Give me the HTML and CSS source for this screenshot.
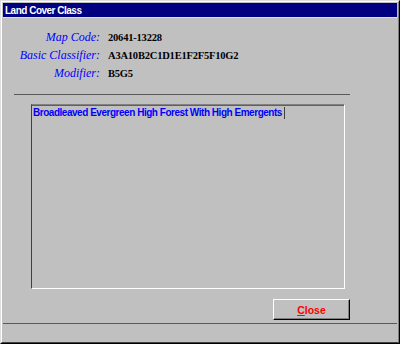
FILE: index.html
```html
<!DOCTYPE html>
<html>
<head>
<meta charset="utf-8">
<link rel="stylesheet" href="styles.css">
</head>
<body>
<div class="window">
  <div class="frame">
    <div class="titlebar"><span class="title">Land Cover Class</span></div>
    <div class="client">
      <div class="fields">
        <div class="label">Map Code:</div><div class="value">20641-13228</div>
        <div class="label">Basic Classifier:</div><div class="value">A3A10B2C1D1E1F2F5F10G2</div>
        <div class="label">Modifier:</div><div class="value">B5G5</div>
      </div>
      <div class="rule"></div>
      <div class="textbox"><span class="desc">Broadleaved Evergreen High Forest With High Emergents</span><span class="caret"></span></div>
      <div class="actions">
        <button class="btn"><span class="ul">C</span>lose</button>
      </div>
    </div>
    <div class="status"></div>
  </div>
</div>
</body>
</html>
```

FILE: styles.css
```css
html, body {
  margin: 0;
  padding: 0;
  background: #c0c0c0;
}
.window {
  width: 400px;
  height: 344px;
  box-sizing: border-box;
  background: #c0c0c0;
  border-top: 1px solid #dfdfdf;
  border-left: 1px solid #dfdfdf;
  border-right: 1px solid #000;
  border-bottom: 1px solid #000;
}
.frame {
  height: 100%;
  box-sizing: border-box;
  border-top: 1px solid #fff;
  border-left: 1px solid #fff;
  border-right: 1px solid #808080;
  border-bottom: 1px solid #404040;
  padding: 1px;
  display: flex;
  flex-direction: column;
}
.titlebar {
  height: 14px;
  background: #000080;
  display: flex;
  align-items: center;
  padding-left: 2px;
  border-bottom: 1px solid #dfdfdf;
}
.title {
  color: #fff;
  font-family: "Liberation Sans", Arial, sans-serif;
  font-weight: bold;
  font-size: 10px;
  letter-spacing: -0.5px;
}
.client {
  flex: 1;
  display: flex;
  flex-direction: column;
}
.fields {
  margin-top: 10px;
  display: grid;
  grid-template-columns: 97px auto;
  column-gap: 8px;
  grid-auto-rows: 18px;
  align-items: center;
}
.label {
  text-align: right;
  font-family: "Liberation Serif", "Times New Roman", serif;
  font-style: italic;
  font-size: 12px;
  color: #0000ff;
}
.value {
  font-family: "Liberation Serif", "Times New Roman", serif;
  font-weight: bold;
  font-size: 10.5px;
  letter-spacing: -0.2px;
  color: #000;
}
.rule {
  margin: 12px 0 0 11px;
  width: 336px;
  height: 1px;
  background: #5a5a5a;
}
.textbox {
  margin: 9px 0 0 28px;
  width: 314px;
  height: 185px;
  box-sizing: border-box;
  border-top: 1px solid #808080;
  border-left: 1px solid #404040;
  border-right: 1px solid #fff;
  border-bottom: 1px solid #fff;
  box-shadow: inset 0 1px 0 #606060;
  padding: 2px 0 0 1px;
  display: flex;
  align-items: flex-start;
}
.desc {
  font-family: "Liberation Sans", Arial, sans-serif;
  font-weight: bold;
  font-size: 10px;
  letter-spacing: -0.47px;
  color: #0000ff;
  line-height: 12px;
}
.caret {
  width: 1px;
  height: 12px;
  margin-left: 2px;
  background: #404040;
}
.actions {
  margin: 10px 0 0 270px;
}
.btn {
  width: 77px;
  height: 21px;
  box-sizing: border-box;
  background: #c0c0c0;
  border-top: 1px solid #fff;
  border-left: 1px solid #fff;
  border-right: 1px solid #000;
  border-bottom: 1px solid #000;
  box-shadow: inset -1px -1px 0 #808080;
  padding: 0;
  font-family: "Liberation Sans", Arial, sans-serif;
  font-weight: bold;
  font-size: 10.5px;
  color: #ff0000;
}
.ul {
  text-decoration: underline;
}
.status {
  height: 17px;
  border-top: 1px solid #5a5a5a;
}
```
